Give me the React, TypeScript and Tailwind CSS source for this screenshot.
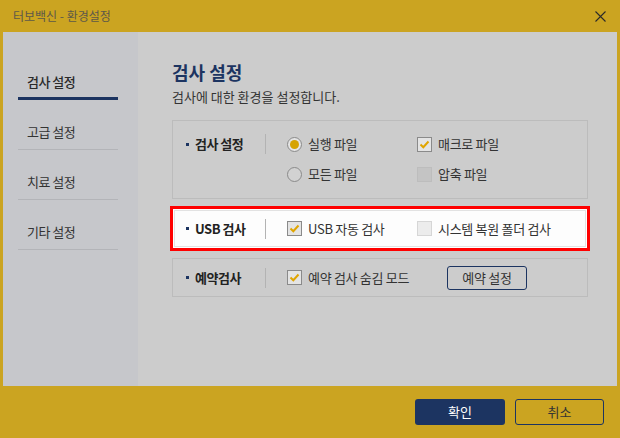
import React from "react";

const NAVY = "#1c3461";

function Radio({ checked }: { checked?: boolean }) {
  return (
    <span
      className={
        "flex h-[15px] w-[15px] shrink-0 items-center justify-center rounded-full border border-[#8a8a8a] " +
        (checked ? "bg-[#e4e4e4]" : "bg-[#d2d2d2]")
      }
    >
      {checked && <span className="h-[9px] w-[9px] rounded-full bg-[#d6a300]" />}
    </span>
  );
}

function Check({ checked, variant }: { checked?: boolean; variant?: "dim" | "light" }) {
  let cls = "border-[#8a8a8a] bg-[#e4e4e4]";
  if (variant === "dim") cls = "border-[#bdbdbd] bg-[#c4c4c4]";
  if (variant === "light") cls = "border-[#d6d6d6] bg-[#ececec]";
  return (
    <span className={"flex h-[15px] w-[15px] shrink-0 items-center justify-center border " + cls}>
      {checked && (
        <svg width="11" height="11" viewBox="0 0 11 11">
          <path d="M1.5 5.5 L4.3 8.2 L9.5 2.5" fill="none" stroke="#e0a500" strokeWidth="2" />
        </svg>
      )}
    </span>
  );
}

function Opt({ control, label, className }: { control: React.ReactNode; label: string; className?: string }) {
  return (
    <div className={"flex h-[22px] items-center gap-[6px] " + (className ?? "")}>
      {control}
      <span className="text-[13px] leading-[18px] tracking-[-0.3px] text-[#333333]">{label}</span>
    </div>
  );
}

function Label({ text, pl }: { text: string; pl: string }) {
  return (
    <div className={"flex h-[22px] items-center " + pl}>
      <span className="mr-[6px] h-[3px] w-[3px] bg-[#1c3461]" />
      <span className="text-[13px] font-bold leading-[18px] tracking-[-0.5px] text-[#222222]">{text}</span>
    </div>
  );
}

function Sep() {
  return <div className="h-[20px] w-px bg-[#b3b3b3]" />;
}

export default function App() {
  const items = ["고급 설정", "치료 설정", "기타 설정"];
  return (
    <div className="flex h-[438px] w-[620px] flex-col bg-[#cba421] font-['Noto_Sans_CJK_KR','Noto_Sans',sans-serif]">
      {/* Title bar */}
      <div className="flex h-[32px] items-center justify-between pl-[13px] pr-[14px]">
        <span className="text-[12px] leading-[16px] text-[#5e5948]">터보백신 - 환경설정</span>
        <svg width="11" height="11" viewBox="0 0 11 11">
          <path d="M0.5 0.5 L10.5 10.5 M10.5 0.5 L0.5 10.5" stroke="#2a2a2a" strokeWidth="1.1" />
        </svg>
      </div>

      {/* Body */}
      <div className="mx-[3px] flex h-[354px]">
        {/* Sidebar */}
        <div className="w-[135px] bg-[#c6c7cb] pl-[15px] pr-[20px] pt-[18px]">
          <div className="border-b-[3px] border-[#1c3461] pb-[7px] pl-[9px] pt-[24px]">
            <span className="block text-[13px] font-medium leading-[16px] tracking-[-0.5px] text-[#2a2a2a]">
              검사 설정
            </span>
          </div>
          {items.map((t) => (
            <div key={t} className="border-b border-[#b3b4b8] pb-[9px] pl-[9px] pt-[24px]">
              <span className="block text-[13px] leading-[16px] tracking-[-0.5px] text-[#333333]">{t}</span>
            </div>
          ))}
        </div>

        {/* Content */}
        <div className="flex-1 bg-[#cccccc] pl-[34px] pr-[29px] pt-[28px]">
          <h1 className="text-[18px] font-bold leading-[24px] text-[#1c3461]">검사 설정</h1>
          <p className="mt-[4px] text-[13px] leading-[18px] text-[#333333]">검사에 대한 환경을 설정합니다.</p>

          {/* Box 1 */}
          <div className="mt-[14px] flex border border-[#bcbcbc] pb-[13px] pt-[12px]">
            <div className="w-[92px]">
              <Label text="검사 설정" pl="pl-[13px]" />
            </div>
            <div className="mt-[1px] self-start">
              <Sep />
            </div>
            <div className="ml-[21px] grid grid-cols-[130px_auto] gap-y-[8px]">
              <Opt control={<Radio checked />} label="실행 파일" />
              <Opt control={<Check checked />} label="매크로 파일" />
              <Opt control={<Radio />} label="모든 파일" />
              <Opt control={<Check variant="dim" />} label="압축 파일" />
            </div>
          </div>

          {/* USB box (highlighted) */}
          <div className="-mx-[2px] mt-[7px] border-[3px] border-[#ff0000] bg-white p-[1px]">
            <div className="flex h-[37px] items-center border border-[#e2e2e2] bg-[#fdfdfd]">
              <div className="w-[90px]">
                <Label text="USB 검사" pl="pl-[11px]" />
              </div>
              <Sep />
              <div className="ml-[21px] flex">
                <Opt className="w-[130px]" control={<Check checked />} label="USB 자동 검사" />
                <Opt control={<Check variant="light" />} label="시스템 복원 폴더 검사" />
              </div>
            </div>
          </div>

          {/* Box 3 */}
          <div className="mt-[7px] flex h-[39px] items-center border border-[#bcbcbc]">
            <div className="w-[92px]">
              <Label text="예약검사" pl="pl-[13px]" />
            </div>
            <Sep />
            <div className="ml-[21px] flex items-center">
              <Opt className="w-[160px]" control={<Check checked />} label="예약 검사 숨김 모드" />
              <button className="flex h-[24px] w-[80px] items-center justify-center rounded-[3px] border border-[#1c3461] text-[13px] leading-[18px] tracking-[-0.3px] text-[#333333]">
                예약 설정
              </button>
            </div>
          </div>
        </div>
      </div>

      {/* Footer */}
      <div className="flex flex-1 items-center justify-end gap-[10px] pr-[16px]">
        <button
          className="flex h-[26px] w-[90px] items-center justify-center rounded-[3px] text-[13px] leading-[18px] text-white"
          style={{ backgroundColor: NAVY }}
        >
          확인
        </button>
        <button className="flex h-[26px] w-[89px] items-center justify-center rounded-[3px] border-[1.5px] border-[#1c3461] text-[13px] leading-[18px] text-[#333333]">
          취소
        </button>
      </div>
    </div>
  );
}
